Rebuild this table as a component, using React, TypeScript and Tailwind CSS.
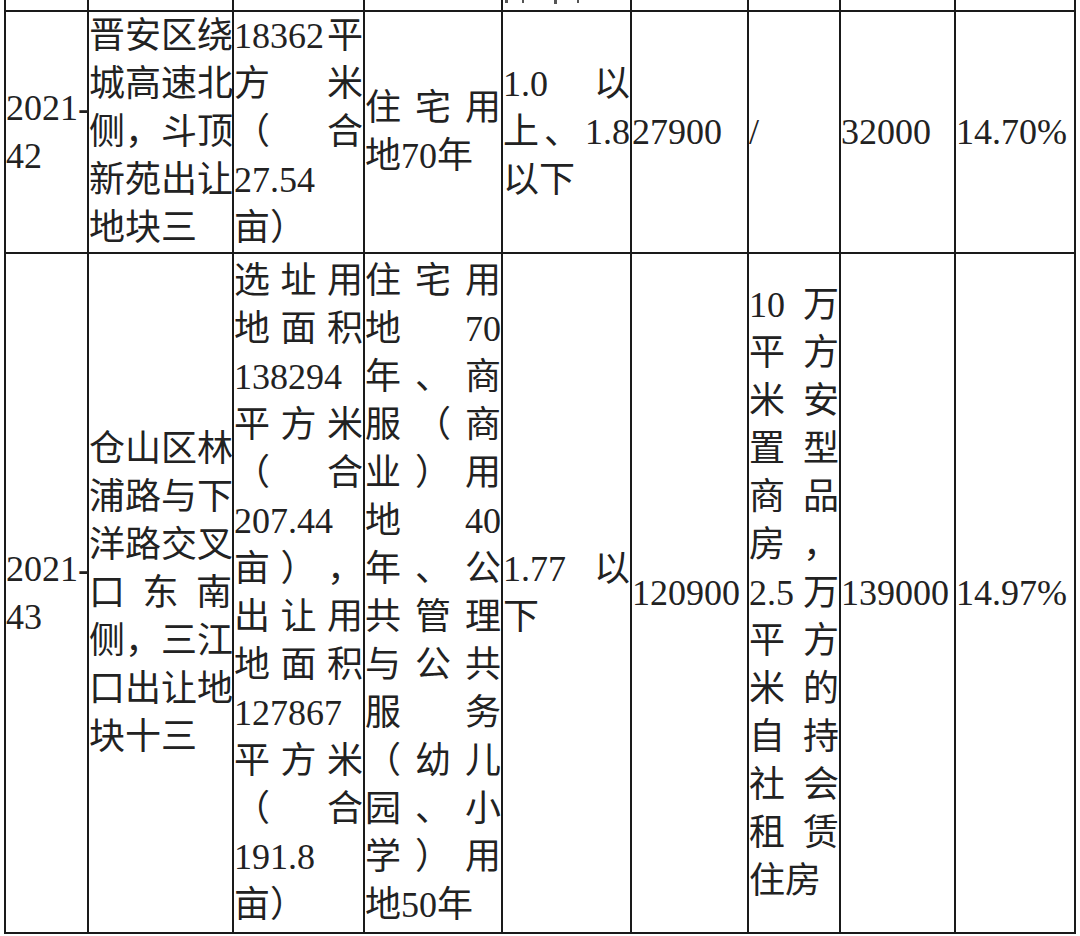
import React from "react"

type Line = string | string[]
type Cell = Line[]

// one table row = 9 cells, each cell = lines (array lines are spread edge to edge, like justified text)
const rows: Cell[][] = [
  [
    ["2021-", "42"],
    ["晋安区绕", "城高速北", ["侧", "，", "斗", "顶"], "新苑出让", "地块三"],
    [["18362", "平"], ["方", "米"], ["（", "合"], "27.54", "亩）"],
    [["住", "宅", "用"], "地70年"],
    [["1.0", "以"], ["上", "、", "1.8"], "以下"],
    ["27900"],
    ["/"],
    ["32000"],
    ["14.70%"],
  ],
  [
    ["2021-", "43"],
    ["仓山区林", "浦路与下", "洋路交叉", ["口", "东", "南"], ["侧", "，", "三", "江"], "口出让地", "块十三"],
    [
      ["选", "址", "用"],
      ["地", "面", "积"],
      "138294",
      ["平", "方", "米"],
      ["（", "合"],
      "207.44",
      ["亩", "）", "，"],
      ["出", "让", "用"],
      ["地", "面", "积"],
      "127867",
      ["平", "方", "米"],
      ["（", "合"],
      "191.8",
      "亩）",
    ],
    [
      ["住", "宅", "用"],
      ["地", "70"],
      ["年", "、", "商"],
      ["服", "（", "商"],
      ["业", "）", "用"],
      ["地", "40"],
      ["年", "、", "公"],
      ["共", "管", "理"],
      ["与", "公", "共"],
      ["服", "务"],
      ["（", "幼", "儿"],
      ["园", "、", "小"],
      ["学", "）", "用"],
      "地50年",
    ],
    [["1.77", "以"], "下"],
    ["120900"],
    [
      ["10", "万"],
      ["平", "方"],
      ["米", "安"],
      ["置", "型"],
      ["商", "品"],
      ["房", "，"],
      ["2.5", "万"],
      ["平", "方"],
      ["米", "的"],
      ["自", "持"],
      ["社", "会"],
      ["租", "赁"],
      "住房",
    ],
    ["139000"],
    ["14.97%"],
  ],
]

function TextLine({ line }: { line: Line }) {
  if (Array.isArray(line)) {
    return (
      <div className="flex justify-between whitespace-nowrap">
        {line.map((part, i) => (
          <span key={i}>{part}</span>
        ))}
      </div>
    )
  }
  return <div className="whitespace-nowrap">{line}</div>
}

export default function App() {
  return (
    <div className="min-h-[936px] bg-white [font-family:'Liberation_Serif','Noto_Sans_CJK_SC',serif] text-[36px] leading-[48px] text-[#222]">
      <div className="ml-[4px] grid w-[1072px] grid-cols-[81px_143px_129px_136px_127px_115px_90px_113px_118px] grid-rows-[10px_240px_678px] gap-[2px] bg-[#1a1a1a] px-[2px] pb-[2px]">
        {/* bottom of the previous row, cut off by the screenshot */}
        {Array.from({ length: 9 }).map((_, i) => (
          <div key={i} className="bg-white">
            {i === 4 && (
              <div className="flex items-start pl-[2px]">
                <span className="h-[3px] w-[3px] bg-[#555]" />
                <span className="ml-[14px] h-[3px] w-[2px] bg-[#555]" />
                <span className="ml-[30px] h-[4px] w-[3px] bg-[#555]" />
                <span className="ml-[20px] h-[3px] w-[2px] bg-[#555]" />
              </div>
            )}
          </div>
        ))}
        {rows.map((row, r) =>
          row.map((cell, c) => (
            <div key={`${r}-${c}`} className="flex flex-col justify-center bg-white">
              {cell.map((line, i) => (
                <TextLine key={i} line={line} />
              ))}
            </div>
          ))
        )}
      </div>
    </div>
  )
}
